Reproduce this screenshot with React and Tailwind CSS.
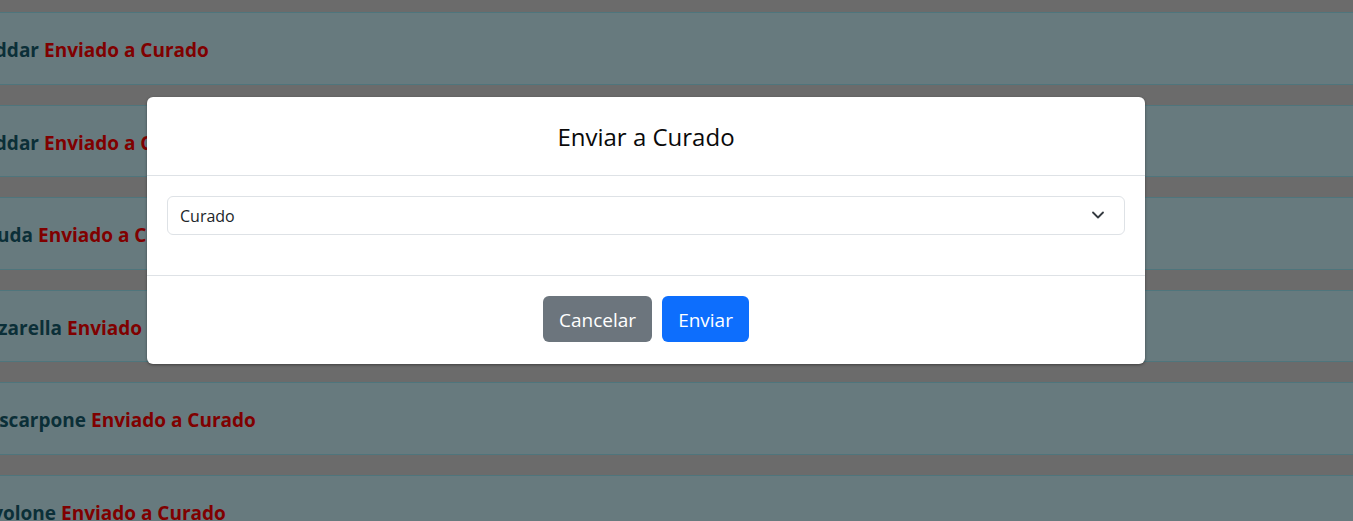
import { ChevronDown } from 'lucide-react';

const rows = [
  { name: 'Cheddar', offset: 'w-[39px]' },
  { name: 'Cheddar', offset: 'w-[39px]' },
  { name: 'Gouda', offset: 'w-[33px]' },
  { name: 'Mozzarella', offset: 'w-[62px]' },
  { name: 'Mascarpone', offset: 'w-[86px]' },
  { name: 'Provolone', offset: 'w-[56px]' },
];

const App = () => {
  return (
    <div className="relative h-[521px] overflow-hidden bg-[#d6d6d6] font-['Open_Sans',sans-serif]">
      <div className="flex flex-col gap-[20px] pt-[12px]">
        {rows.map((r, i) => (
          <div
            key={i}
            className="flex h-[72.5px] shrink-0 items-center border-y border-[#9eeaf9] bg-[#cff4fc] pt-[4px] text-[19px] font-bold whitespace-nowrap"
          >
            <div className={`flex shrink-0 justify-end ${r.offset}`}>
              <span className="text-[#165f70]">{r.name}</span>
            </div>
            <span className="pl-[5px] text-[#ff0000]">Enviado a Curado</span>
          </div>
        ))}
      </div>

      {/* modal */}
      <div className="absolute inset-0 bg-black/50">
        <div className="ml-[147px] mt-[97px] w-[998px] rounded-[6px] bg-white shadow-[0_1px_3px_rgba(0,0,0,0.4)]">
          <div className="flex h-[79px] items-center justify-center border-b border-[#dee2e6] pt-[2px]">
            <h4 className="text-[24px] text-[#0a0a0a]">Enviar a Curado</h4>
          </div>
          <div className="border-b border-[#dee2e6] px-5 pt-5 pb-[40px]">
            <div className="relative">
              <select className="h-[39px] w-full appearance-none rounded-[6px] border border-[#dee2e6] bg-white pl-3 pr-9 text-[16px] text-[#212529] outline-none">
                <option>Curado</option>
              </select>
              <ChevronDown className="pointer-events-none absolute right-[17px] top-[9px] h-5 w-5 text-[#343a40]" strokeWidth={2.2} />
            </div>
          </div>
          <div className="flex justify-center gap-[10px] pt-5 pb-[22px]">
            <button className="h-[46px] rounded-[6px] bg-[#6c757d] px-4 pt-[3px] text-[19px] text-white">Cancelar</button>
            <button className="h-[46px] rounded-[6px] bg-[#0d6efd] px-4 pt-[3px] text-[19px] text-white">Enviar</button>
          </div>
        </div>
      </div>
    </div>
  );
};

export default App;
